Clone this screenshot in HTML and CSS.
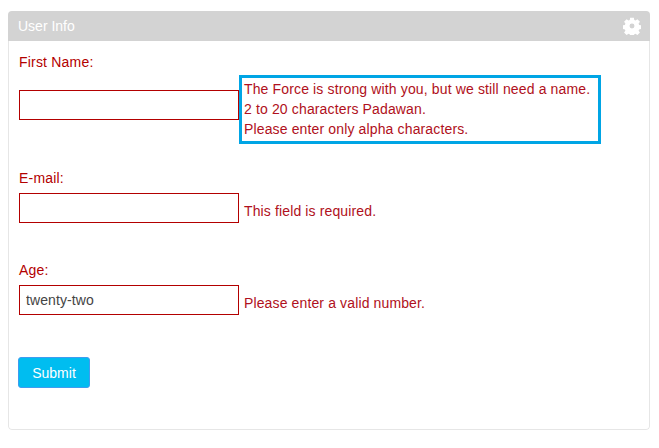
FILE: index.html
```html
<!DOCTYPE html>
<html lang="en">
<head>
<meta charset="utf-8">
<title>User Info</title>
<link rel="stylesheet" href="styles.css">
</head>
<body>
<section class="panel">
  <header class="panel-head">
    <h2 class="panel-title">User Info</h2>
    <svg class="gear" viewBox="0 0 24 24" width="18" height="18" aria-hidden="true"><path fill="#fff" fill-rule="evenodd" d="M9.500 1h5l.5 3 1.700.7 2.500-1.800 3.400 3.400-1.800 2.500.7 1.700 3 .5v5l-3 .5-.7 1.700 1.800 2.500-3.400 3.400-2.500-1.800-1.700.7-.5 3h-5l-.5-3-1.700-.7-2.500 1.800-3.400-3.400 1.800-2.500-.7-1.700-3-.5v-5l3-.5.7-1.700-1.800-2.500 3.400-3.400 2.500 1.800L9 4zM12 8.700a3.300 3.300 0 1 0 0 6.600 3.300 3.300 0 0 0 0-6.600z"/></svg>
  </header>
  <form class="panel-body">
    <div class="field field-name">
      <label class="label" for="fn">First Name:</label>
      <div class="row">
        <input class="input input-offset" id="fn" type="text">
        <div class="msg-box">The Force is strong with you, but we still need a name.<br>2 to 20 characters Padawan.<br>Please enter only alpha characters.</div>
      </div>
    </div>
    <div class="field field-email">
      <label class="label" for="em">E-mail:</label>
      <div class="row">
        <input class="input" id="em" type="text">
        <div class="msg">This field is required.</div>
      </div>
    </div>
    <div class="field field-age">
      <label class="label" for="ag">Age:</label>
      <div class="row">
        <input class="input" id="ag" type="text" value="twenty-two">
        <div class="msg">Please enter a valid number.</div>
      </div>
    </div>
    <button class="submit" type="button">Submit</button>
  </form>
</section>
</body>
</html>
```
FILE: styles.css
```css
* { box-sizing: border-box; }
html, body { margin: 0; padding: 0; background: #fff; }
body {
  padding: 11px 9px 18px 8px;
  font-family: "Liberation Sans", Arial, sans-serif;
  font-size: 14px;
  line-height: 20px;
  color: #b30000;
}
.panel {
  height: 419px;
  display: flex;
  flex-direction: column;
  border-radius: 4px;
  overflow: hidden;
}
.panel-head {
  height: 30px;
  flex: none;
  display: flex;
  align-items: center;
  justify-content: space-between;
  padding: 0 9px 0 10px;
  background: #d3d3d3;
}
.panel-title {
  margin: 0;
  font-size: 14px;
  font-weight: normal;
  color: #fff;
}
.gear { display: block; }
.panel-body {
  flex: 1;
  padding: 11px 10px 0 10px;
  border: 1px solid #e6e6e6;
  border-top: 0;
  border-radius: 0 0 4px 4px;
}
.label { display: block; letter-spacing: .2px; }
.row { display: flex; align-items: flex-start; }
.field-name .row { margin-top: 3px; }
.field-email { margin-top: 24px; }
.field-email .row { margin-top: 5px; }
.field-age { margin-top: 37px; }
.field-age .row { margin-top: 5px; }
.input {
  width: 220px;
  height: 30px;
  flex: none;
  padding: 0 6px;
  border: 1px solid #b30000;
  border-radius: 0;
  background: #fff;
  outline: 0;
  font: 14px/20px "Liberation Sans", Arial, sans-serif;
  letter-spacing: .1px;
  color: #444;
}
.input-offset { margin-top: 15px; }
.msg-box {
  width: 362px;
  height: 69px;
  padding: 1px 0 0 2px;
  border: 3px solid #00a5e5;
  letter-spacing: .14px;
  color: #b01020;
}
.msg { margin: 8px 0 0 5px; letter-spacing: .13px; color: #b01020; }
.submit {
  display: block;
  width: 72px;
  height: 31px;
  margin: 42px 0 0 -1px;
  padding: 0;
  border: 1px solid #3f9cf0;
  border-radius: 3px;
  background: #00bdf0;
  font: 14px/20px "Liberation Sans", Arial, sans-serif;
  color: #fff;
}
```
